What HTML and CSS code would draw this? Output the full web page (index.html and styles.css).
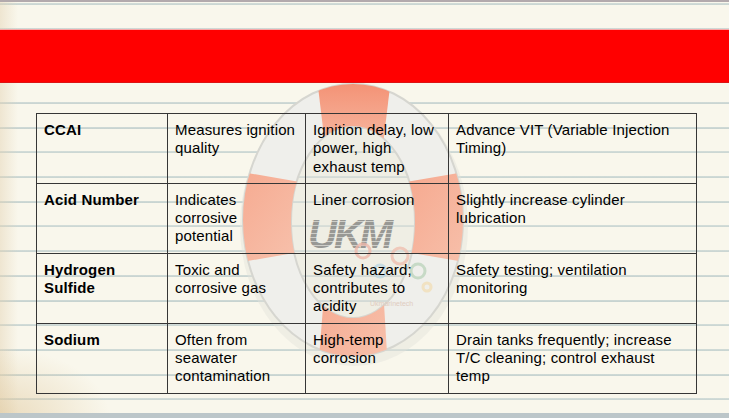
FILE: index.html
```html
<!DOCTYPE html>
<html lang="en">
<head>
<meta charset="utf-8">
<title>Fuel properties</title>
<link rel="stylesheet" href="styles.css">
</head>
<body>
<div class="page">
  <div class="topline"></div>
  <div class="band"></div>
  <svg class="buoy" width="260" height="320" viewBox="0 0 260 320" aria-hidden="true">
    <defs>
      <clipPath id="ring">
        <path clip-rule="evenodd" d="M13,150 a110,136 0 1,0 220,0 a110,136 0 1,0 -220,0 Z M61,152 a62,96 0 1,0 124,0 a62,96 0 1,0 -124,0 Z"/>
      </clipPath>
      <linearGradient id="og" x1="0" y1="0" x2="1" y2="1">
        <stop offset="0" stop-color="#f6a88e"/>
        <stop offset="1" stop-color="#f7c2ad"/>
      </linearGradient>
      <linearGradient id="ogt" x1="0" y1="0" x2="0" y2="1">
        <stop offset="0" stop-color="#f38a6c"/>
        <stop offset="1" stop-color="#f8c8b4"/>
      </linearGradient>
      <pattern id="stripes" width="6" height="4" patternUnits="userSpaceOnUse">
        <rect width="6" height="3" fill="#8a8a87"/>
        <rect y="3" width="6" height="1" fill="#c9c9c4"/>
      </pattern>
    </defs>
    <ellipse cx="124" cy="156" rx="114" ry="140" fill="#e2e2dc" opacity="0.45"/>
    <path fill-rule="evenodd" fill="#efefeb" stroke="#d6d6d0" stroke-width="2" d="M13,150 a110,136 0 1,0 220,0 a110,136 0 1,0 -220,0 Z M61,152 a62,96 0 1,0 124,0 a62,96 0 1,0 -124,0 Z"/>
    <g clip-path="url(#ring)">
      <polygon fill="url(#ogt)" points="86,0 162,0 150,100 98,100"/>
      <polygon fill="url(#og)" points="96,200 152,200 158,300 88,300"/>
      <polygon fill="url(#og)" points="0,100 70,112 70,182 0,194"/>
      <polygon fill="url(#og)" points="176,112 246,100 246,194 176,182"/>
    </g>
    <text class="logo" x="78" y="178">UKM</text>
    <g fill="none" stroke-width="3" opacity="0.8">
      <circle cx="133" cy="181" r="7" stroke="#eeb8aa"/>
      <circle cx="170" cy="186" r="8" stroke="#efc0b0"/>
      <circle cx="188" cy="201" r="7" stroke="#bed6be"/>
      <circle cx="150" cy="201" r="6" stroke="#bed8e2"/>
      <circle cx="197" cy="217" r="4" stroke="#f2dfb8"/>
    </g>
    <text class="tag" x="140" y="236">Ukmarinetech</text>
  </svg>
  <main class="content">
    <table class="grid">
      <colgroup>
        <col class="c1"><col class="c2"><col class="c3"><col class="c4">
      </colgroup>
      <tbody>
        <tr>
          <th>CCAI</th>
          <td>Measures ignition quality</td>
          <td>Ignition delay, low power, high exhaust temp</td>
          <td>Advance VIT (Variable Injection Timing)</td>
        </tr>
        <tr>
          <th>Acid Number</th>
          <td>Indicates corrosive potential</td>
          <td>Liner corrosion</td>
          <td>Slightly increase cylinder lubrication</td>
        </tr>
        <tr>
          <th>Hydrogen Sulfide</th>
          <td>Toxic and corrosive gas</td>
          <td>Safety hazard; contributes to acidity</td>
          <td>Safety testing; ventilation monitoring</td>
        </tr>
        <tr>
          <th>Sodium</th>
          <td>Often from seawater contamination</td>
          <td>High-temp corrosion</td>
          <td>Drain tanks frequently; increase T/C cleaning; control exhaust temp</td>
        </tr>
      </tbody>
    </table>
  </main>
  <div class="bottomline"></div>
</div>
</body>
</html>
```
FILE: styles.css
```css
html, body {
  margin: 0;
  padding: 0;
}
body {
  width: 729px;
  height: 418px;
  overflow: hidden;
  font-family: "Liberation Sans", Arial, sans-serif;
}
.page {
  position: relative;
  width: 729px;
  height: 418px;
  display: flex;
  flex-direction: column;
  background-color: #f9f7ec;
  background-image:
    radial-gradient(ellipse 110px 70px at 0 100%, rgba(222, 196, 150, 0.55), rgba(222, 196, 150, 0) 100%),
    linear-gradient(to right, rgba(226, 208, 176, 0.45), rgba(226, 208, 176, 0) 18px),
    repeating-linear-gradient(to bottom,
      rgba(0, 0, 0, 0) 0px,
      rgba(0, 0, 0, 0) 3.2px,
      #d2dcd8 3.2px,
      #c7d3d0 5.2px,
      rgba(0, 0, 0, 0) 5.2px,
      rgba(0, 0, 0, 0) 24.7px);
}
.topline {
  height: 2px;
  background: #b3aaad;
  flex: none;
}
.band {
  position: relative;
  z-index: 2;
  flex: none;
  margin-top: 27px;
  height: 52px;
  background: #ff0000;
  border-top: 1px solid #f7a8a8;
  border-bottom: 1px solid #dc1414;
}
.buoy {
  position: absolute;
  left: 230px;
  top: 70px;
  z-index: 0;
}
.logo {
  font-family: "Liberation Sans", Arial, sans-serif;
  font-weight: bold;
  font-style: italic;
  font-size: 40px;
  fill: url(#stripes);
  opacity: 0.85;
  letter-spacing: -3px;
}
.tag {
  font-family: "Liberation Sans", Arial, sans-serif;
  font-size: 7px;
  fill: #e0ccc0;
}
.content {
  position: relative;
  z-index: 1;
  flex: none;
  padding: 30px 0 0 36px;
}
.grid {
  border-collapse: collapse;
  table-layout: fixed;
  width: 660px;
}
.c1 { width: 131px; }
.c2 { width: 138px; }
.c3 { width: 143px; }
.c4 { width: 248px; }
.grid th,
.grid td {
  border: 1px solid #363636;
  padding: 7px 8px 7px 7px;
  vertical-align: top;
  text-align: left;
  font-size: 15px;
  letter-spacing: 0.15px;
  line-height: 18.3px;
  color: #000;
}
.grid th {
  font-weight: bold;
}
.grid td {
  font-weight: normal;
}
.bottomline {
  margin-top: auto;
  flex: none;
  height: 5px;
  background: #bcc6c9;
}
```
